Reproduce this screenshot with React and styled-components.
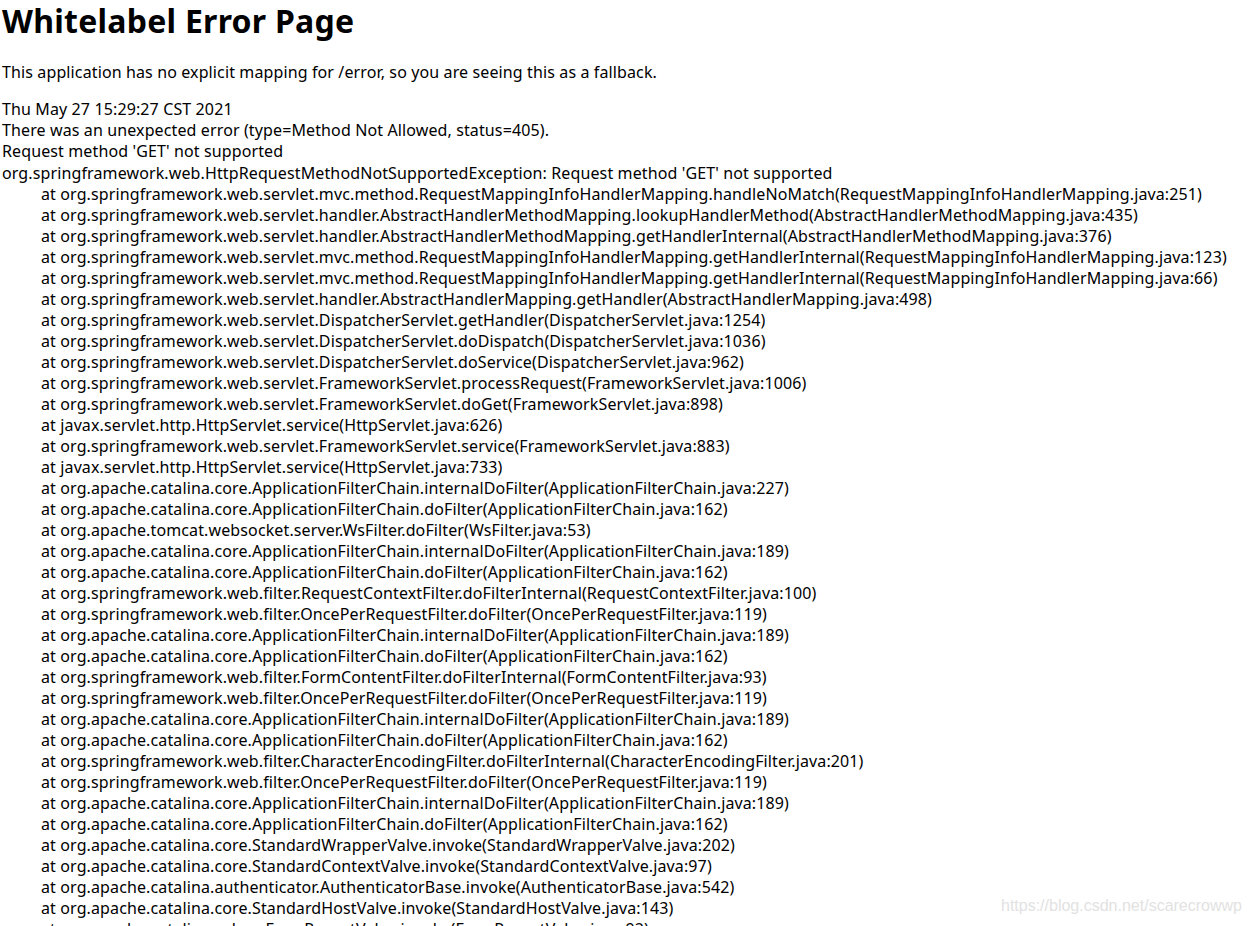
import React from "react";
import styled, { createGlobalStyle } from "styled-components";

const GlobalStyle = createGlobalStyle`
  html, body {
    margin: 0;
    padding: 0;
    background: #ffffff;
  }
  body {
    font-family: "Noto Sans", "Open Sans", "Noto Sans CJK SC", sans-serif;
    color: #000000;
    overflow: hidden;
  }
`;

const trace = [
  "org.springframework.web.servlet.mvc.method.RequestMappingInfoHandlerMapping.handleNoMatch(RequestMappingInfoHandlerMapping.java:251)",
  "org.springframework.web.servlet.handler.AbstractHandlerMethodMapping.lookupHandlerMethod(AbstractHandlerMethodMapping.java:435)",
  "org.springframework.web.servlet.handler.AbstractHandlerMethodMapping.getHandlerInternal(AbstractHandlerMethodMapping.java:376)",
  "org.springframework.web.servlet.mvc.method.RequestMappingInfoHandlerMapping.getHandlerInternal(RequestMappingInfoHandlerMapping.java:123)",
  "org.springframework.web.servlet.mvc.method.RequestMappingInfoHandlerMapping.getHandlerInternal(RequestMappingInfoHandlerMapping.java:66)",
  "org.springframework.web.servlet.handler.AbstractHandlerMapping.getHandler(AbstractHandlerMapping.java:498)",
  "org.springframework.web.servlet.DispatcherServlet.getHandler(DispatcherServlet.java:1254)",
  "org.springframework.web.servlet.DispatcherServlet.doDispatch(DispatcherServlet.java:1036)",
  "org.springframework.web.servlet.DispatcherServlet.doService(DispatcherServlet.java:962)",
  "org.springframework.web.servlet.FrameworkServlet.processRequest(FrameworkServlet.java:1006)",
  "org.springframework.web.servlet.FrameworkServlet.doGet(FrameworkServlet.java:898)",
  "javax.servlet.http.HttpServlet.service(HttpServlet.java:626)",
  "org.springframework.web.servlet.FrameworkServlet.service(FrameworkServlet.java:883)",
  "javax.servlet.http.HttpServlet.service(HttpServlet.java:733)",
  "org.apache.catalina.core.ApplicationFilterChain.internalDoFilter(ApplicationFilterChain.java:227)",
  "org.apache.catalina.core.ApplicationFilterChain.doFilter(ApplicationFilterChain.java:162)",
  "org.apache.tomcat.websocket.server.WsFilter.doFilter(WsFilter.java:53)",
  "org.apache.catalina.core.ApplicationFilterChain.internalDoFilter(ApplicationFilterChain.java:189)",
  "org.apache.catalina.core.ApplicationFilterChain.doFilter(ApplicationFilterChain.java:162)",
  "org.springframework.web.filter.RequestContextFilter.doFilterInternal(RequestContextFilter.java:100)",
  "org.springframework.web.filter.OncePerRequestFilter.doFilter(OncePerRequestFilter.java:119)",
  "org.apache.catalina.core.ApplicationFilterChain.internalDoFilter(ApplicationFilterChain.java:189)",
  "org.apache.catalina.core.ApplicationFilterChain.doFilter(ApplicationFilterChain.java:162)",
  "org.springframework.web.filter.FormContentFilter.doFilterInternal(FormContentFilter.java:93)",
  "org.springframework.web.filter.OncePerRequestFilter.doFilter(OncePerRequestFilter.java:119)",
  "org.apache.catalina.core.ApplicationFilterChain.internalDoFilter(ApplicationFilterChain.java:189)",
  "org.apache.catalina.core.ApplicationFilterChain.doFilter(ApplicationFilterChain.java:162)",
  "org.springframework.web.filter.CharacterEncodingFilter.doFilterInternal(CharacterEncodingFilter.java:201)",
  "org.springframework.web.filter.OncePerRequestFilter.doFilter(OncePerRequestFilter.java:119)",
  "org.apache.catalina.core.ApplicationFilterChain.internalDoFilter(ApplicationFilterChain.java:189)",
  "org.apache.catalina.core.ApplicationFilterChain.doFilter(ApplicationFilterChain.java:162)",
  "org.apache.catalina.core.StandardWrapperValve.invoke(StandardWrapperValve.java:202)",
  "org.apache.catalina.core.StandardContextValve.invoke(StandardContextValve.java:97)",
  "org.apache.catalina.authenticator.AuthenticatorBase.invoke(AuthenticatorBase.java:542)",
  "org.apache.catalina.core.StandardHostValve.invoke(StandardHostValve.java:143)",
  "org.apache.catalina.valves.ErrorReportValve.invoke(ErrorReportValve.java:92)",
];

const App = () => {
  return (
    <Page>
      <GlobalStyle />
      <Title>Whitelabel Error Page</Title>
      <Para>This application has no explicit mapping for /error, so you are seeing this as a fallback.</Para>
      <Line>Thu May 27 15:29:27 CST 2021</Line>
      <Line>There was an unexpected error (type=Method Not Allowed, status=405).</Line>
      <Line>Request method 'GET' not supported</Line>
      <Trace>
        <Line>org.springframework.web.HttpRequestMethodNotSupportedException: Request method 'GET' not supported</Line>
        {trace.map((t, i) => (
          <Frame key={i}>at {t}</Frame>
        ))}
      </Trace>
      <Watermark>https://blog.csdn.net/scarecrowwp</Watermark>
    </Page>
  );
};

export default App;

const Page = styled.div`
  position: relative;
  height: 926px;
  padding-left: 2px;
  font-size: 16px;
  letter-spacing: 0.12px;
  overflow: hidden;
`;

const Title = styled.h1`
  margin: 0 0 20px;
  font-size: 32px;
  line-height: 42px;
  letter-spacing: 0.25px;
  font-weight: bold;
`;

const Para = styled.p`
  margin: 0 0 16px;
  line-height: 21px;
`;

const Line = styled.div`
  line-height: 21px;
  white-space: nowrap;
`;

const Trace = styled.div`
  display: flex;
  flex-direction: column;
  padding-top: 1px;
`;

const Frame = styled(Line)`
  padding-left: 39px;
`;

const Watermark = styled.div`
  position: absolute;
  right: 10px;
  top: 896px;
  font-family: "Liberation Sans", Arial, sans-serif;
  font-size: 16px;
  line-height: 20px;
  letter-spacing: 0;
  color: #e2e2e2;
`;
